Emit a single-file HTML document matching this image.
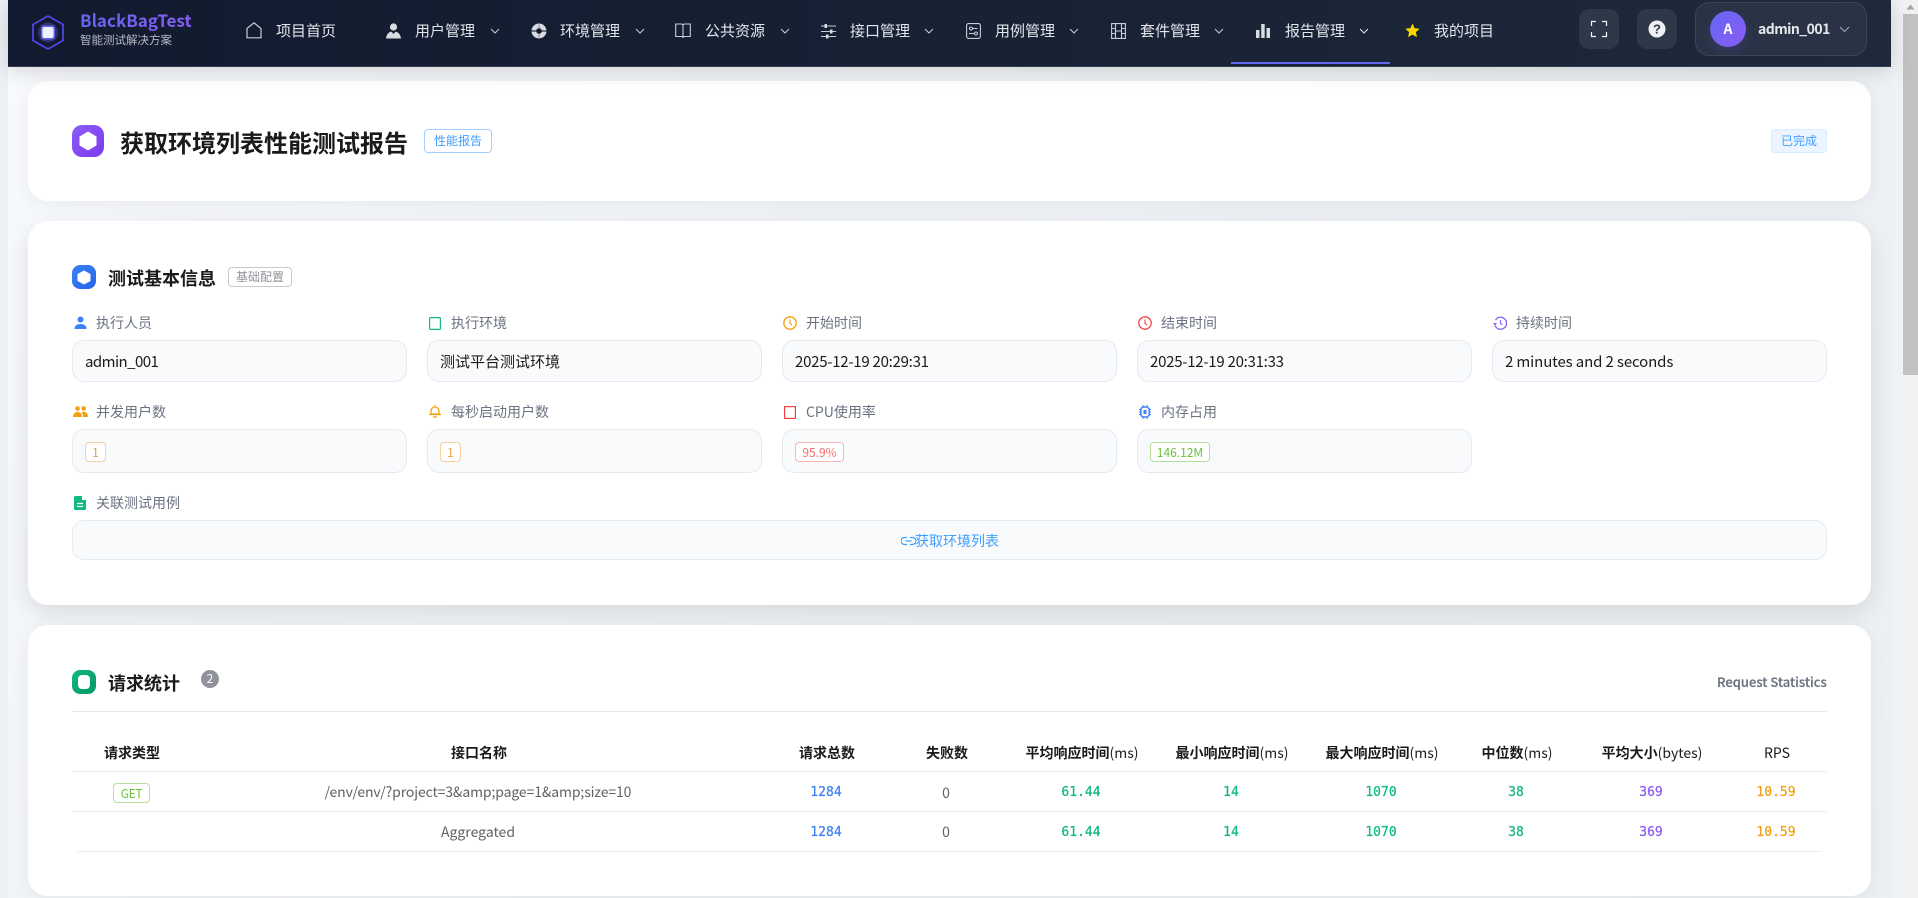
<!DOCTYPE html>
<html lang="zh-CN">
<head>
<meta charset="utf-8">
<title>获取环境列表性能测试报告</title>
<style>
html,body{margin:0;padding:0;width:1918px;height:898px;overflow:hidden;background:#f0f1f3;}
body{position:relative;font-family:"Noto Sans CJK SC","Liberation Sans",sans-serif;color:#1a1a1a;}
div,span,svg{box-sizing:border-box;}
.a{position:absolute;white-space:nowrap;}
.bg{position:absolute;left:8px;top:0;width:1883px;height:898px;background:linear-gradient(135deg,#f8fafd 0%,#eef1f5 55%,#ecf0f4 100%);}
.strip{position:absolute;left:0;top:0;width:8px;height:898px;background:#edf0f5;}
.hd{position:absolute;left:8px;top:0;width:1883px;height:67px;background:linear-gradient(90deg,#111a2e 0%,#1e293b 100%);border-bottom:1px solid #343c4e;box-shadow:0 4px 20px rgba(0,0,0,.15);z-index:5;}
.top{z-index:6;}
.nav{color:#e2e5ea;font-size:15px;line-height:20px;top:21px;z-index:6;}
.ic{position:absolute;z-index:6;overflow:visible;}
.card{position:absolute;left:28px;width:1843px;background:#fff;border-radius:20px;box-shadow:0 4px 20px rgba(0,0,0,.06);}
.lb{position:absolute;font-size:14px;line-height:20px;color:#6b7280;white-space:nowrap;}
.fd{position:absolute;width:335px;background:#f8fafc;border:1.5px solid #e5eaf2;border-radius:12px;}
.val{position:absolute;font-size:15px;line-height:20px;color:#1a1a1a;white-space:nowrap;}
.tag{position:absolute;font-size:12px;border-radius:4px;border:1px solid;text-align:center;white-space:nowrap;}
.th{position:absolute;top:743px;height:20px;line-height:20px;font-size:14px;font-weight:700;color:#1a1a1a;text-align:center;white-space:nowrap;transform:translateX(-50%);}
.th i{font-style:normal;font-weight:400;}
.td{position:absolute;line-height:20px;font-size:14px;color:#606266;text-align:center;white-space:nowrap;transform:translateX(-50%);}
.n{font-family:"DejaVu Sans Mono","Liberation Mono",monospace;font-size:13px;font-weight:400;-webkit-text-stroke:.25px currentColor;}
.ln{position:absolute;height:1px;background:#ebeef2;}
</style>
</head>
<body>
<div class="bg"></div>
<div class="strip"></div>

<!-- scrollbar -->
<div class="a" style="left:1903px;top:0;width:15px;height:898px;background:#f1f1f1;"></div>
<div class="a" style="left:1903px;top:14px;width:15px;height:361px;background:#c1c1c1;"></div>
<svg class="a" style="left:1906px;top:4px;" width="9" height="6"><path d="M4.500 0.500L8.500 5.500H0.500z" fill="#a3a3a3"/></svg>

<!-- header -->
<div class="hd"></div>
<svg class="ic" style="left:30px;top:14px;" width="36" height="36" viewBox="0 0 36 36">
  <path d="M18 2L33 10.500V26.500L18 35L3 26.500V10.500Z" fill="none" stroke="#4f46e5" stroke-width="1.800"/>
  <circle cx="18" cy="18.500" r="10" fill="#6366f1" opacity=".35"/>
  <rect x="11" y="11.500" width="14" height="14" rx="3" fill="#6366f1"/>
  <rect x="12.500" y="13" width="11" height="11" rx="2" fill="#eef0ff"/>
</svg>
<div class="a top" style="left:80px;top:9px;font-size:17px;line-height:22px;font-weight:700;background:linear-gradient(90deg,#6366f1,#8b5cf6);-webkit-background-clip:text;background-clip:text;color:transparent;">BlackBagTest</div>
<div class="a top" style="left:80px;top:32px;font-size:11.500px;line-height:16px;color:#b5b9c2;">智能测试解决方案</div>

<svg class="ic" style="left:246px;top:22px;" width="16" height="17" viewBox="0 0 16 17"><path d="M1 15.800V6.500L8 .8l7 5.700v9.300z" fill="none" stroke="#c9cdd4" stroke-width="1.200"/></svg>
<div class="a nav" style="left:276px;">项目首页</div>

<svg class="ic" style="left:386px;top:23px;" width="15" height="16" viewBox="0 0 15 16"><circle cx="7.500" cy="4" r="3.600" fill="#d8dbe0"/><path d="M0 15.500C.5 11 3 9 5.500 8.600L7.500 11l2-2.400C12 9 14.500 11 15 15.500z" fill="#d8dbe0"/></svg>
<div class="a nav" style="left:415px;">用户管理</div>

<svg class="ic" style="left:531px;top:23px;" width="16" height="16" viewBox="0 0 16 16"><circle cx="8" cy="8" r="7.500" fill="#d8dbe0"/><circle cx="8" cy="8" r="2.800" fill="#141c30"/><path d="M0 8h16" stroke="#141c30" stroke-width="1.100"/><path d="M8 1.500v13" stroke="#141c30" stroke-width=".8" opacity=".55"/></svg>
<div class="a nav" style="left:560px;">环境管理</div>

<svg class="ic" style="left:675px;top:23px;" width="16" height="15" viewBox="0 0 16 15"><path d="M.7 1h6.300l1 1 1-1h6.300v12.500H9l-1 1-1-1H.7zM8 2v11.500" fill="none" stroke="#c9cdd4" stroke-width="1.100"/></svg>
<div class="a nav" style="left:705px;">公共资源</div>

<svg class="ic" style="left:821px;top:23px;" width="15" height="16" viewBox="0 0 15 16"><path d="M0 3h15M0 8.500h15M0 13.500h15" stroke="#c9cdd4" stroke-width="1"/><rect x="3.500" y="1" width="2.500" height="4" fill="#d8dbe0"/><rect x="9" y="6.500" width="2.500" height="4" fill="#d8dbe0"/><rect x="5" y="11.500" width="2.500" height="4" fill="#d8dbe0"/></svg>
<div class="a nav" style="left:850px;">接口管理</div>

<svg class="ic" style="left:966px;top:23px;" width="15" height="16" viewBox="0 0 15 16"><rect x=".6" y=".6" width="13.800" height="14.800" rx="2" fill="none" stroke="#c9cdd4" stroke-width="1.100"/><circle cx="5" cy="5.500" r="1.500" fill="none" stroke="#c9cdd4"/><path d="M6.500 5.500h5M3 10.500h5" stroke="#c9cdd4"/><circle cx="10" cy="10.500" r="1.500" fill="none" stroke="#c9cdd4"/></svg>
<div class="a nav" style="left:995px;">用例管理</div>

<svg class="ic" style="left:1111px;top:23px;" width="15" height="16" viewBox="0 0 15 16"><path d="M.6.6h13.800v14.800H.6zM4.500.6v14.800M10.500.6v14.800M.6 5.500h3.900M.6 10.500h3.900M10.500 5.500h3.900M10.500 10.500h3.900M4.500 8h6" fill="none" stroke="#c9cdd4" stroke-width="1.100"/></svg>
<div class="a nav" style="left:1140px;">套件管理</div>

<svg class="ic" style="left:1256px;top:24px;" width="14" height="14" viewBox="0 0 14 14"><rect x="0" y="6" width="3.500" height="8" fill="#d8dbe0"/><rect x="5.200" y="0" width="3.500" height="14" fill="#d8dbe0"/><rect x="10.500" y="4" width="3.500" height="10" fill="#d8dbe0"/></svg>
<div class="a nav" style="left:1285px;">报告管理</div>

<svg class="ic" style="left:490px;top:28px;" width="10" height="6" viewBox="0 0 10 6"><path d="M1 1l4 4 4-4" fill="none" stroke="#c9cdd4" stroke-width="1"/></svg>
<svg class="ic" style="left:635px;top:28px;" width="10" height="6" viewBox="0 0 10 6"><path d="M1 1l4 4 4-4" fill="none" stroke="#c9cdd4" stroke-width="1"/></svg>
<svg class="ic" style="left:780px;top:28px;" width="10" height="6" viewBox="0 0 10 6"><path d="M1 1l4 4 4-4" fill="none" stroke="#c9cdd4" stroke-width="1"/></svg>
<svg class="ic" style="left:924px;top:28px;" width="10" height="6" viewBox="0 0 10 6"><path d="M1 1l4 4 4-4" fill="none" stroke="#c9cdd4" stroke-width="1"/></svg>
<svg class="ic" style="left:1069px;top:28px;" width="10" height="6" viewBox="0 0 10 6"><path d="M1 1l4 4 4-4" fill="none" stroke="#c9cdd4" stroke-width="1"/></svg>
<svg class="ic" style="left:1214px;top:28px;" width="10" height="6" viewBox="0 0 10 6"><path d="M1 1l4 4 4-4" fill="none" stroke="#c9cdd4" stroke-width="1"/></svg>
<svg class="ic" style="left:1359px;top:28px;" width="10" height="6" viewBox="0 0 10 6"><path d="M1 1l4 4 4-4" fill="none" stroke="#e2e5ea" stroke-width="1"/></svg>

<div class="a top" style="left:1231px;top:62px;width:159px;height:2px;background:#6366f1;"></div>

<svg class="ic" style="left:1405px;top:23px;" width="15" height="15" viewBox="0 0 15 15"><path d="M7.500.5l2.100 4.600 5 .6-3.700 3.400 1 5-4.400-2.500-4.400 2.500 1-5L.4 5.700l5-.6z" fill="#ffd700"/></svg>
<div class="a nav" style="left:1434px;">我的项目</div>

<div class="a top" style="left:1579px;top:9px;width:40px;height:40px;border-radius:10px;background:#2e3849;"></div>
<svg class="ic" style="left:1591px;top:21px;" width="16" height="16" viewBox="0 0 16 16"><path d="M.5 5V.5H5M11 .5h4.500V5M.5 11v4.500H5M11 15.500h4.500V11" fill="none" stroke="#f0f2f5" stroke-width="1.200"/></svg>
<div class="a top" style="left:1637px;top:9px;width:40px;height:40px;border-radius:10px;background:#2e3849;"></div>
<svg class="ic" style="left:1648px;top:20px;" width="18" height="18" viewBox="0 0 18 18"><circle cx="9" cy="9" r="8.500" fill="#eef1f5"/><text x="9" y="13.500" font-family="Liberation Sans,sans-serif" font-size="13" font-weight="700" text-anchor="middle" fill="#2e3849">?</text></svg>

<div class="a top" style="left:1695px;top:2px;width:172px;height:54px;border-radius:14px;background:#293345;border:1px solid #3b4557;"></div>
<div class="a top" style="left:1710px;top:11px;width:36px;height:36px;border-radius:50%;background:linear-gradient(135deg,#6366f1,#8b5cf6);box-shadow:0 4px 10px rgba(99,102,241,.2);color:#fff;font-size:14px;font-weight:700;line-height:36px;text-align:center;">A</div>
<div class="a top" style="left:1758px;top:19px;font-size:14px;line-height:20px;font-weight:700;letter-spacing:-.55px;color:#e5e7eb;">admin_001</div>
<svg class="ic" style="left:1839px;top:26px;" width="11" height="7" viewBox="0 0 11 7"><path d="M1 1l4.500 4.500L10 1" fill="none" stroke="#a3a9b5" stroke-width="1"/></svg>

<!-- card 1 -->
<div class="card" style="top:81px;height:120px;"></div>
<div class="a" style="left:72px;top:125px;width:32px;height:32px;border-radius:10px;background:linear-gradient(135deg,#8b5cf6,#7c3aed);"></div>
<svg class="a" style="left:79px;top:131px;" width="18" height="20" viewBox="0 0 18 20"><path d="M9 .5L17.500 5.500V14.500L9 19.500.5 14.500V5.500Z" fill="#fff"/></svg>
<div class="a" style="left:120px;top:125px;font-size:24px;line-height:34px;font-weight:700;color:#1a1a1a;">获取环境列表性能测试报告</div>
<div class="tag" style="left:424px;top:129px;width:68px;height:24px;line-height:22px;color:#409eff;border-color:#a0cfff;background:#fff;">性能报告</div>
<div class="tag" style="left:1771px;top:129px;width:56px;height:24px;line-height:22px;color:#409eff;border-color:#d9ecff;background:#ecf5ff;">已完成</div>

<!-- card 2 -->
<div class="card" style="top:221px;height:384px;box-shadow:0 8px 24px rgba(0,0,0,.11);"></div>
<div class="a" style="left:72px;top:265px;width:24px;height:24px;border-radius:8px;background:linear-gradient(135deg,#3b82f6,#2563eb);"></div>
<svg class="a" style="left:77px;top:270px;" width="14" height="15" viewBox="0 0 14 15"><path d="M7 .5l6.500 3.500v7L7 14.500.5 11V4z" fill="#fff"/></svg>
<div class="a" style="left:108px;top:265px;font-size:18px;line-height:26px;font-weight:700;color:#1a1a1a;">测试基本信息</div>
<div class="tag" style="left:228px;top:267px;width:64px;height:20px;line-height:18px;color:#909399;border-color:#c8c9cc;background:#fff;">基础配置</div>

<!-- labels row 1 -->
<svg class="a" style="left:74px;top:316px;" width="13" height="14" viewBox="0 0 13 14"><circle cx="6.500" cy="3.500" r="3" fill="#3b82f6"/><path d="M.5 13c0-3.500 2.500-5 6-5s6 1.500 6 5z" fill="#3b82f6"/></svg>
<div class="lb" style="left:96px;top:313px;">执行人员</div>
<svg class="a" style="left:429px;top:317px;" width="12" height="13" viewBox="0 0 12 13"><rect x=".6" y=".6" width="10.800" height="11.800" rx="1" fill="none" stroke="#10b981" stroke-width="1.200"/></svg>
<div class="lb" style="left:451px;top:313px;">执行环境</div>
<svg class="a" style="left:783px;top:316px;" width="14" height="14" viewBox="0 0 14 14"><circle cx="7" cy="7" r="6.200" fill="none" stroke="#f59e0b" stroke-width="1.300"/><path d="M7 3.500V7.500l2 1.500" fill="none" stroke="#f59e0b" stroke-width="1.100"/></svg>
<div class="lb" style="left:806px;top:313px;">开始时间</div>
<svg class="a" style="left:1138px;top:316px;" width="14" height="14" viewBox="0 0 14 14"><circle cx="7" cy="7" r="6.200" fill="none" stroke="#ef4444" stroke-width="1.300"/><path d="M7 3.500V7.500l2 1.500" fill="none" stroke="#ef4444" stroke-width="1.100"/></svg>
<div class="lb" style="left:1161px;top:313px;">结束时间</div>
<svg class="a" style="left:1493px;top:316px;" width="14" height="14" viewBox="0 0 14 14"><path d="M2.500 4A6 6 0 1 1 2 9.500" fill="none" stroke="#8b5cf6" stroke-width="1.300"/><path d="M0 7h4L2 9.500z" fill="#8b5cf6"/><path d="M7.500 4v3.500l2 1.300" fill="none" stroke="#8b5cf6" stroke-width="1.100"/></svg>
<div class="lb" style="left:1516px;top:313px;">持续时间</div>

<!-- fields row 1 -->
<div class="fd" style="left:72px;top:340px;height:42px;"></div>
<div class="fd" style="left:427px;top:340px;height:42px;"></div>
<div class="fd" style="left:782px;top:340px;height:42px;"></div>
<div class="fd" style="left:1137px;top:340px;height:42px;"></div>
<div class="fd" style="left:1492px;top:340px;height:42px;"></div>
<div class="val" style="left:85px;top:352px;letter-spacing:-.55px;">admin_001</div>
<div class="val" style="left:440px;top:352px;">测试平台测试环境</div>
<div class="val" style="left:795px;top:352px;letter-spacing:-.26px;">2025-12-19 20:29:31</div>
<div class="val" style="left:1150px;top:352px;letter-spacing:-.26px;">2025-12-19 20:31:33</div>
<div class="val" style="left:1505px;top:352px;letter-spacing:-.13px;">2 minutes and 2 seconds</div>

<!-- labels row 2 -->
<svg class="a" style="left:73px;top:406px;" width="15" height="11" viewBox="0 0 15 11"><circle cx="4.500" cy="2.500" r="2.300" fill="#f59e0b"/><circle cx="10.700" cy="2.500" r="2.300" fill="#f59e0b"/><path d="M0 11c0-3 1.800-5 4.500-5S9 8 9 11zM10 11c0-2-.5-3.500-1.500-4.700.7-.3 1.400-.4 2.200-.4 2.600 0 4.300 2 4.300 5.100z" fill="#f59e0b"/></svg>
<div class="lb" style="left:96px;top:402px;">并发用户数</div>
<svg class="a" style="left:429px;top:405px;" width="12" height="14" viewBox="0 0 12 14"><path d="M2 9V6a4 4 0 0 1 8 0v3z" fill="none" stroke="#f59e0b" stroke-width="1.300"/><path d="M0 9.500h12M4 12h4M6 1V0" stroke="#f59e0b" stroke-width="1.300"/></svg>
<div class="lb" style="left:451px;top:402px;">每秒启动用户数</div>
<svg class="a" style="left:784px;top:406px;" width="12" height="13" viewBox="0 0 12 13"><rect x=".6" y=".6" width="10.800" height="11.800" fill="none" stroke="#ef4444" stroke-width="1.200"/></svg>
<div class="lb" style="left:806px;top:402px;">CPU使用率</div>
<svg class="a" style="left:1139px;top:405px;" width="12" height="14" viewBox="0 0 12 14"><rect x="1.800" y="2" width="8.400" height="10" rx="3" fill="none" stroke="#3b82f6" stroke-width="1.500"/><rect x="4.500" y="5" width="3" height="4" fill="#3b82f6"/><path d="M0 4.500h2M0 7h2M0 9.500h2M10 4.500h2M10 7h2M10 9.500h2M4 0v2M8 0v2M4 12v2M8 12v2" stroke="#3b82f6"/></svg>
<div class="lb" style="left:1161px;top:402px;">内存占用</div>

<!-- fields row 2 -->
<div class="fd" style="left:72px;top:429px;height:44px;"></div>
<div class="fd" style="left:427px;top:429px;height:44px;"></div>
<div class="fd" style="left:782px;top:429px;height:44px;"></div>
<div class="fd" style="left:1137px;top:429px;height:44px;"></div>
<div class="tag" style="left:85px;top:442px;width:21px;height:20px;line-height:19px;color:#e6a23c;border-color:#f3d19e;background:#fff;">1</div>
<div class="tag" style="left:440px;top:442px;width:21px;height:20px;line-height:19px;color:#e6a23c;border-color:#f3d19e;background:#fff;">1</div>
<div class="tag" style="left:795px;top:442px;width:49px;height:20px;line-height:19px;color:#f56c6c;border-color:#fab6b6;background:#fff;">95.9%</div>
<div class="tag" style="left:1150px;top:442px;width:60px;height:20px;line-height:19px;color:#67c23a;border-color:#b3e19d;background:#fff;">146.12M</div>

<!-- row 3 -->
<svg class="a" style="left:74px;top:496px;" width="12" height="14" viewBox="0 0 12 14"><path d="M1.500 0H8l4 4v8.500a1.500 1.500 0 0 1-1.500 1.500h-9A1.500 1.500 0 0 1 0 12.500v-11A1.500 1.500 0 0 1 1.500 0z" fill="#10b981"/><path d="M8 0v4h4z" fill="#fff"/><path d="M3 7.500h6M3 10.500h6" stroke="#fff" stroke-width="1.200"/></svg>
<div class="lb" style="left:96px;top:493px;">关联测试用例</div>
<div class="fd" style="left:72px;top:520px;height:40px;width:1755px;"></div>
<svg class="a" style="left:901px;top:535px;" width="15" height="12" viewBox="0 0 15 12"><path d="M6 2.500H3.500a3.500 3.500 0 0 0 0 7H6M9 2.500h2.500a3.500 3.500 0 0 1 0 7H9M4.500 6h6" fill="none" stroke="#409eff" stroke-width="1.200"/></svg>
<div class="a" style="left:915px;top:531px;font-size:14px;line-height:20px;color:#409eff;">获取环境列表</div>

<!-- card 3 -->
<div class="card" style="top:625px;height:271px;"></div>
<div class="a" style="left:72px;top:670px;width:24px;height:24px;border-radius:8px;background:linear-gradient(135deg,#10b981,#059669);"></div>
<div class="a" style="left:78px;top:675px;width:12px;height:14px;border-radius:4px;background:#fff;"></div>
<div class="a" style="left:108px;top:670px;font-size:18px;line-height:26px;font-weight:700;color:#1a1a1a;">请求统计</div>
<div class="a" style="left:201px;top:670px;width:18px;height:18px;border-radius:50%;background:#909399;color:#fff;font-size:12px;line-height:18px;text-align:center;">2</div>
<div class="a" style="left:1717px;top:672px;font-size:13px;line-height:20px;font-weight:500;color:#6b7280;-webkit-text-stroke:.2px #6b7280;">Request Statistics</div>
<div class="ln" style="left:72px;top:711px;width:1755px;background:#e8e8f0;"></div>

<div class="th" style="left:132px;">请求类型</div>
<div class="th" style="left:479px;">接口名称</div>
<div class="th" style="left:827px;">请求总数</div>
<div class="th" style="left:947px;">失败数</div>
<div class="th" style="left:1082px;">平均响应时间<i>(ms)</i></div>
<div class="th" style="left:1232px;">最小响应时间<i>(ms)</i></div>
<div class="th" style="left:1382px;">最大响应时间<i>(ms)</i></div>
<div class="th" style="left:1517px;">中位数<i>(ms)</i></div>
<div class="th" style="left:1652px;">平均大小<i>(bytes)</i></div>
<div class="th" style="left:1777px;"><i>RPS</i></div>

<div class="ln" style="left:72px;top:771px;width:1755px;"></div>
<div class="ln" style="left:72px;top:811px;width:1755px;"></div>
<div class="ln" style="left:77px;top:851px;width:1745px;"></div>

<div class="tag" style="left:113px;top:783px;width:37px;height:20px;line-height:19px;color:#67c23a;border-color:#b3e19d;background:#fff;letter-spacing:-.3px;">GET</div>
<div class="td" style="left:478px;top:782px;letter-spacing:-.12px;">/env/env/?project=3&amp;amp;page=1&amp;amp;size=10</div>
<div class="td n" style="left:826px;top:783px;color:#3b82f6;">1284</div>
<div class="td" style="left:946px;top:783px;">0</div>
<div class="td n" style="left:1081px;top:783px;color:#10b981;">61.44</div>
<div class="td n" style="left:1231px;top:783px;color:#10b981;">14</div>
<div class="td n" style="left:1381px;top:783px;color:#10b981;">1070</div>
<div class="td n" style="left:1516px;top:783px;color:#10b981;">38</div>
<div class="td n" style="left:1651px;top:783px;color:#8b5cf6;">369</div>
<div class="td n" style="left:1776px;top:783px;color:#f59e0b;">10.59</div>

<div class="td" style="left:478px;top:822px;">Aggregated</div>
<div class="td n" style="left:826px;top:823px;color:#3b82f6;">1284</div>
<div class="td" style="left:946px;top:822px;">0</div>
<div class="td n" style="left:1081px;top:823px;color:#10b981;">61.44</div>
<div class="td n" style="left:1231px;top:823px;color:#10b981;">14</div>
<div class="td n" style="left:1381px;top:823px;color:#10b981;">1070</div>
<div class="td n" style="left:1516px;top:823px;color:#10b981;">38</div>
<div class="td n" style="left:1651px;top:823px;color:#8b5cf6;">369</div>
<div class="td n" style="left:1776px;top:823px;color:#f59e0b;">10.59</div>
</body>
</html>
